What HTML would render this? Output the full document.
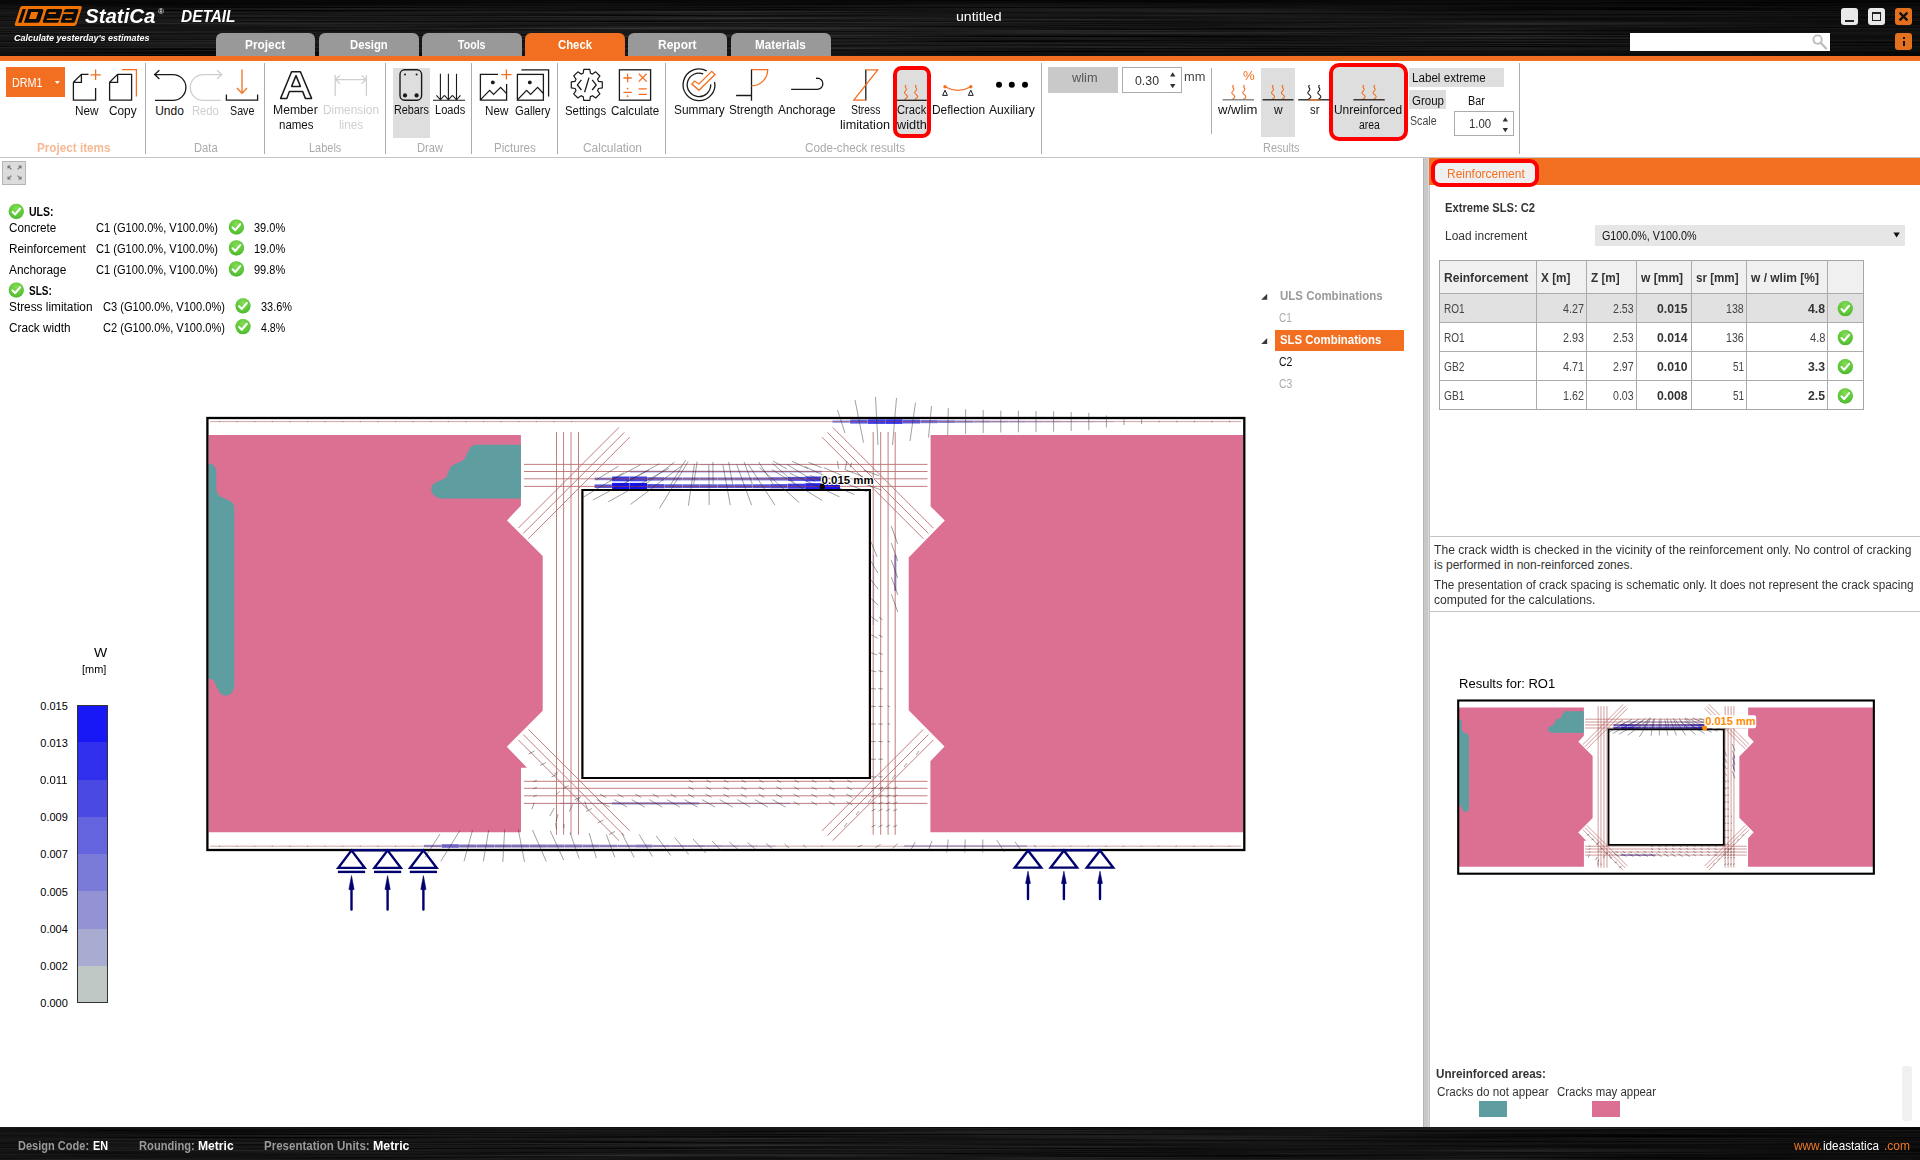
<!DOCTYPE html><html><head><meta charset="utf-8"><title>IDEA StatiCa Detail</title><style>
html,body{margin:0;padding:0;background:#fff;}
body{width:1920px;height:1160px;position:relative;overflow:hidden;font-family:"Liberation Sans",sans-serif;}
.t{position:absolute;white-space:nowrap;line-height:1;transform-origin:0 0;display:block;}
.b{position:absolute;box-sizing:border-box;}
svg{position:absolute;overflow:visible}
#dro1reb line,#dro1c{vector-effect:non-scaling-stroke}
.brush{background:
 repeating-linear-gradient(180deg, rgba(255,255,255,0.05) 0px, rgba(255,255,255,0) 1px, rgba(255,255,255,0.035) 2px, rgba(0,0,0,0) 3px, rgba(255,255,255,0.02) 5px),
 linear-gradient(180deg,#050505 0%,#1c1c1c 22%,#262626 38%,#141414 60%,#070707 100%);}
</style></head><body>
<svg style="left:0;top:0" width="1920" height="57"><defs><filter id="brush" x="0" y="0" width="100%" height="100%" color-interpolation-filters="sRGB"><feTurbulence type="fractalNoise" baseFrequency="0.0022 0.8" numOctaves="3" seed="4" result="n"/><feColorMatrix type="matrix" values="0.30 0 0 0 -0.05  0.30 0 0 0 -0.05  0.30 0 0 0 -0.05  0 0 0 0 1"/></filter><linearGradient id="hg" x1="0" y1="0" x2="0" y2="1"><stop offset="0" stop-color="#000" stop-opacity="0.75"/><stop offset="0.18" stop-color="#000" stop-opacity="0.15"/><stop offset="0.5" stop-color="#000" stop-opacity="0"/><stop offset="0.85" stop-color="#000" stop-opacity="0.1"/><stop offset="1" stop-color="#000" stop-opacity="0.45"/></linearGradient><linearGradient id="hg2" x1="0" y1="0" x2="1" y2="0"><stop offset="0" stop-color="#000" stop-opacity="0.1"/><stop offset="0.5" stop-color="#000" stop-opacity="0"/><stop offset="0.8" stop-color="#000" stop-opacity="0.2"/><stop offset="1" stop-color="#000" stop-opacity="0.45"/></linearGradient></defs><rect width="1920" height="57" fill="#1a1a1a"/><rect width="1920" height="57" filter="url(#brush)"/><rect width="1920" height="57" fill="url(#hg)"/><rect width="1920" height="57" fill="url(#hg2)"/></svg>
<div class="b" style="left:0px;top:56px;width:1920px;height:5px;background:#F26F21;"></div>
<div class="b" style="left:215.5px;top:33px;width:99.5px;height:23px;background:#999;border-radius:6px 6px 0 0;"></div>
<span class="t" style="left:244.70px;top:39px;font-size:12.5px;color:#fff;font-weight:bold;transform:scaleX(0.9486);">Project</span>
<div class="b" style="left:319.2px;top:33px;width:99.4px;height:23px;background:#999;border-radius:6px 6px 0 0;"></div>
<span class="t" style="left:350.20px;top:39px;font-size:12.5px;color:#fff;font-weight:bold;transform:scaleX(0.9070);">Design</span>
<div class="b" style="left:422.3px;top:33px;width:99.3px;height:23px;background:#999;border-radius:6px 6px 0 0;"></div>
<span class="t" style="left:458.40px;top:39px;font-size:12.5px;color:#fff;font-weight:bold;transform:scaleX(0.8486);">Tools</span>
<div class="b" style="left:525px;top:33px;width:100px;height:23px;background:#F26F21;border-radius:6px 6px 0 0;"></div>
<span class="t" style="left:558.00px;top:39px;font-size:12.5px;color:#fff;font-weight:bold;transform:scaleX(0.9063);">Check</span>
<div class="b" style="left:627.8px;top:33px;width:99.7px;height:23px;background:#999;border-radius:6px 6px 0 0;"></div>
<span class="t" style="left:658.00px;top:39px;font-size:12.5px;color:#fff;font-weight:bold;transform:scaleX(0.9584);">Report</span>
<div class="b" style="left:731.3px;top:33px;width:99.3px;height:23px;background:#999;border-radius:6px 6px 0 0;"></div>
<span class="t" style="left:755.00px;top:39px;font-size:12.5px;color:#fff;font-weight:bold;transform:scaleX(0.9374);">Materials</span>
<svg style="left:0;top:0" width="260" height="56" viewBox="0 0 260 56">
<g transform="translate(14.2,26) skewX(-17.7)">
<rect x="0" y="-20" width="61.8" height="20" rx="2" fill="#F07204"/>
<g fill="#0a0a0a">
<rect x="2.9" y="-16.9" width="3.4" height="13.7"/>
<path d="M8.7,-16.9 H22.3 Q24.3,-16.9 24.3,-14.9 V-5.2 Q24.3,-3.2 22.3,-3.2 H8.7 Z M12.5,-14 V-7 H19.6 V-14 Z" fill-rule="evenodd"/>
<rect x="27.1" y="-16.9" width="16" height="13.7" rx="1.6"/>
<rect x="45" y="-16.9" width="14.4" height="13.7" rx="1.6"/>
</g><g fill="#F07204">
<rect x="30.3" y="-13.7" width="7.4" height="1.7"/><rect x="30.5" y="-7.6" width="12.8" height="1.6"/>
<rect x="44.8" y="-13.7" width="10.4" height="1.7"/><rect x="48.8" y="-7.6" width="6.7" height="1.6"/>
</g></g></svg>
<span class="t" style="left:85.00px;top:6px;font-size:20px;color:#fff;font-weight:bold;font-style:italic;transform:scaleX(1.0231);">StatiCa</span>
<span class="t" style="left:157.50px;top:8px;font-size:7px;color:#fff;transform:scaleX(1.1633);">®</span>
<span class="t" style="left:181.30px;top:9px;font-size:15.8px;color:#fff;font-weight:bold;font-style:italic;transform:scaleX(0.9753);">DETAIL</span>
<span class="t" style="left:13.80px;top:33px;font-size:9.6px;color:#fff;font-weight:bold;font-style:italic;transform:scaleX(0.9374);">Calculate yesterday's estimates</span>
<span class="t" style="left:955.50px;top:10px;font-size:13px;color:#fff;transform:scaleX(1.0854);">untitled</span>
<div class="b" style="left:1841.2px;top:8px;width:16.8px;height:17px;background:#e9e9e9;border-radius:3px;"></div>
<div class="b" style="left:1845px;top:19.6px;width:9px;height:2px;background:#222;"></div>
<div class="b" style="left:1868px;top:8px;width:17px;height:17px;background:#e9e9e9;border-radius:3px;"></div>
<div class="b" style="left:1872px;top:12px;width:9px;height:9px;background:transparent;border:1.6px solid #222;border-top-width:2.6px;"></div>
<div class="b" style="left:1895px;top:8px;width:17px;height:17px;background:#e2701f;border-radius:3px;"></div>
<svg style="left:1895px;top:8px" width="17" height="17"><path d="M4.6,4.6 L12.4,12.4 M12.4,4.6 L4.6,12.4" stroke="#111" stroke-width="2.2"/></svg>
<div class="b" style="left:1895px;top:33px;width:17px;height:17px;background:#e2701f;border-radius:3px;"></div>
<div class="b" style="left:1902.5px;top:37px;width:2.5px;height:2.4px;background:#111;"></div>
<div class="b" style="left:1902.5px;top:41px;width:2.5px;height:5.4px;background:#111;"></div>
<div class="b" style="left:1630px;top:33.4px;width:200px;height:17.2px;background:#fff;"></div>
<svg style="left:1810px;top:33px" width="20" height="18"><circle cx="7.6" cy="6.6" r="4.2" fill="none" stroke="#bbb" stroke-width="1.8"/><path d="M10.6,9.8 L16.6,16" stroke="#bbb" stroke-width="2.2"/></svg>
<div class="b" style="left:0px;top:156.5px;width:1920px;height:1.5px;background:#c6c6c6;"></div>
<div class="b" style="left:144.9px;top:63.3px;width:1px;height:91px;background:#ababab;"></div>
<div class="b" style="left:264.1px;top:63.3px;width:1px;height:91px;background:#ababab;"></div>
<div class="b" style="left:385.1px;top:63.3px;width:1px;height:91px;background:#ababab;"></div>
<div class="b" style="left:470.8px;top:63.3px;width:1px;height:91px;background:#ababab;"></div>
<div class="b" style="left:557px;top:63.3px;width:1px;height:91px;background:#ababab;"></div>
<div class="b" style="left:665.1px;top:63.3px;width:1px;height:91px;background:#ababab;"></div>
<div class="b" style="left:1041.2px;top:63.3px;width:1px;height:91px;background:#ababab;"></div>
<div class="b" style="left:1518.5px;top:63.3px;width:1px;height:91px;background:#ababab;"></div>
<div class="b" style="left:1210.6px;top:67.7px;width:1.2px;height:66.3px;background:#ababab;"></div>
<span class="t" style="left:36.50px;top:142px;font-size:12.5px;color:#f6b995;font-weight:bold;transform:scaleX(0.9363);">Project items</span>
<span class="t" style="left:194.00px;top:142px;font-size:12px;color:#aaa;transform:scaleX(0.9350);">Data</span>
<span class="t" style="left:309.40px;top:142px;font-size:12px;color:#aaa;transform:scaleX(0.9135);">Labels</span>
<span class="t" style="left:416.50px;top:142px;font-size:12px;color:#aaa;transform:scaleX(0.9285);">Draw</span>
<span class="t" style="left:494.00px;top:142px;font-size:12px;color:#aaa;transform:scaleX(0.9643);">Pictures</span>
<span class="t" style="left:582.50px;top:142px;font-size:12px;color:#aaa;transform:scaleX(0.9939);">Calculation</span>
<span class="t" style="left:804.80px;top:142px;font-size:12px;color:#aaa;transform:scaleX(0.9736);">Code-check results</span>
<span class="t" style="left:1262.50px;top:142px;font-size:12px;color:#aaa;transform:scaleX(0.9122);">Results</span>
<div class="b" style="left:5.8px;top:67px;width:59.2px;height:29.8px;background:#F26F21;"></div>
<span class="t" style="left:12.40px;top:77px;font-size:12.5px;color:#fff;transform:scaleX(0.8612);">DRM1</span>
<svg style="left:53px;top:79px" width="10" height="8"><path d="M1.8,2 L6.8,2 L4.3,5 Z" fill="#fff"/></svg>
<div class="b" style="left:393px;top:68px;width:37px;height:69.7px;background:#dedede;"></div>
<div class="b" style="left:1261.3px;top:67.7px;width:33.5px;height:69.6px;background:#dedede;"></div>
<div class="b" style="left:893px;top:66.3px;width:37.8px;height:71.6px;background:#dedede;border:4px solid #fe0000;border-radius:8.5px;"></div>
<div class="b" style="left:1329.2px;top:63.3px;width:78.6px;height:77.5px;background:#dedede;border:4.4px solid #fe0000;border-radius:10px;"></div>
<span class="t" style="left:75.40px;top:105px;font-size:12px;color:#111;transform:scaleX(0.9831);">New</span>
<span class="t" style="left:109.40px;top:105px;font-size:12px;color:#111;transform:scaleX(0.9853);">Copy</span>
<span class="t" style="left:155.20px;top:105px;font-size:12px;color:#111;">Undo</span>
<span class="t" style="left:229.80px;top:105px;font-size:12px;color:#111;transform:scaleX(0.8921);">Save</span>
<span class="t" style="left:273.30px;top:104px;font-size:12px;color:#111;transform:scaleX(1.0157);">Member</span>
<span class="t" style="left:278.50px;top:119px;font-size:12px;color:#111;transform:scaleX(0.9579);">names</span>
<span class="t" style="left:394.20px;top:104px;font-size:12px;color:#111;transform:scaleX(0.8996);">Rebars</span>
<span class="t" style="left:434.60px;top:104px;font-size:12px;color:#111;transform:scaleX(0.9237);">Loads</span>
<span class="t" style="left:484.60px;top:105px;font-size:12px;color:#111;transform:scaleX(0.9748);">New</span>
<span class="t" style="left:515.40px;top:105px;font-size:12px;color:#111;transform:scaleX(0.9313);">Gallery</span>
<span class="t" style="left:565.40px;top:105px;font-size:12px;color:#111;transform:scaleX(0.9479);">Settings</span>
<span class="t" style="left:610.60px;top:105px;font-size:12px;color:#111;transform:scaleX(0.9635);">Calculate</span>
<span class="t" style="left:674.20px;top:104px;font-size:12px;color:#111;transform:scaleX(0.9894);">Summary</span>
<span class="t" style="left:729.20px;top:104px;font-size:12px;color:#111;transform:scaleX(0.9765);">Strength</span>
<span class="t" style="left:778.30px;top:104px;font-size:12px;color:#111;transform:scaleX(0.9941);">Anchorage</span>
<span class="t" style="left:851.30px;top:104px;font-size:12px;color:#111;transform:scaleX(0.8674);">Stress</span>
<span class="t" style="left:840.20px;top:119px;font-size:12px;color:#111;transform:scaleX(1.0560);">limitation</span>
<span class="t" style="left:897.00px;top:104px;font-size:12px;color:#111;transform:scaleX(0.9350);">Crack</span>
<span class="t" style="left:896.50px;top:119px;font-size:12px;color:#111;transform:scaleX(1.0638);">width</span>
<span class="t" style="left:931.50px;top:104px;font-size:12px;color:#111;transform:scaleX(0.9951);">Deflection</span>
<span class="t" style="left:989.20px;top:104px;font-size:12px;color:#111;transform:scaleX(1.0100);">Auxiliary</span>
<span class="t" style="left:1218.00px;top:104px;font-size:12px;color:#111;transform:scaleX(1.0919);">w/wlim</span>
<span class="t" style="left:1274.00px;top:104px;font-size:12px;color:#111;transform:scaleX(0.9924);">w</span>
<span class="t" style="left:1309.80px;top:104px;font-size:12px;color:#111;transform:scaleX(0.9403);">sr</span>
<span class="t" style="left:1334.20px;top:104px;font-size:12px;color:#111;transform:scaleX(0.9927);">Unreinforced</span>
<span class="t" style="left:1358.60px;top:119px;font-size:12px;color:#111;transform:scaleX(0.8702);">area</span>
<span class="t" style="left:192.00px;top:105px;font-size:12px;color:#cfcfcf;transform:scaleX(0.9343);">Redo</span>
<span class="t" style="left:322.50px;top:104px;font-size:12px;color:#cfcfcf;transform:scaleX(0.9879);">Dimension</span>
<span class="t" style="left:339.00px;top:119px;font-size:12px;color:#cfcfcf;transform:scaleX(0.9725);">lines</span>
<div class="b" style="left:1047.7px;top:67px;width:70.3px;height:25.5px;background:#c9c9c9;"></div>
<span class="t" style="left:1072.20px;top:72px;font-size:12px;color:#555;transform:scaleX(1.0628);">wlim</span>
<div class="b" style="left:1122px;top:67px;width:59.8px;height:25.5px;background:#fff;border:1px solid #ababab;"></div>
<span class="t" style="left:1135.00px;top:75px;font-size:12.5px;color:#333;transform:scaleX(0.9865);">0.30</span>
<svg style="left:1168px;top:70px" width="10" height="22"><path d="M2,6.4 L7.4,6.4 L4.7,2.2 Z M2,14 L7.4,14 L4.7,18.2 Z" fill="#333"/></svg>
<span class="t" style="left:1184.40px;top:71px;font-size:12px;color:#444;transform:scaleX(1.0703);">mm</span>
<div class="b" style="left:1409px;top:68.2px;width:95px;height:19.1px;background:#dedede;"></div>
<span class="t" style="left:1411.50px;top:72px;font-size:12px;color:#111;transform:scaleX(0.9692);">Label extreme</span>
<div class="b" style="left:1409px;top:90.4px;width:37px;height:19px;background:#dedede;"></div>
<span class="t" style="left:1411.50px;top:95px;font-size:12px;color:#111;transform:scaleX(0.9595);">Group</span>
<span class="t" style="left:1467.50px;top:95px;font-size:12px;color:#111;transform:scaleX(0.9050);">Bar</span>
<span class="t" style="left:1410.20px;top:115px;font-size:12px;color:#444;transform:scaleX(0.8862);">Scale</span>
<div class="b" style="left:1454px;top:111.2px;width:59.8px;height:25px;background:#fff;border:1px solid #ababab;"></div>
<span class="t" style="left:1468.80px;top:118px;font-size:12.5px;color:#333;transform:scaleX(0.9125);">1.00</span>
<svg style="left:1500px;top:113px" width="10" height="22"><path d="M2.6,8.4 L8,8.4 L5.3,4.2 Z M2.6,15 L8,15 L5.3,19.2 Z" fill="#333"/></svg>
<span class="t" style="left:1242.50px;top:69px;font-size:13.5px;color:#F26F21;transform:scaleX(0.9747);">%</span>
<svg style="left:0;top:0" width="1920" height="160" viewBox="0 0 1920 160" fill="none" stroke-width="1.3"><path d="M73.4,82.3 L73.4,100.2 L95.6,100.2 L95.6,88 M73.4,82.3 L81.4,74.3 L88.5,74.3 M73.4,82.3 L81.4,82.3 L81.4,74.3" stroke="#1a1a1a"/><path d="M95.6,69.6 L95.6,80 M90.4,74.8 L100.8,74.8" stroke="#F26F21"/><path d="M109.6,82.3 L109.6,100.2 L131.6,100.2 L131.6,74.3 L117.6,74.3 Z M109.6,82.3 L117.6,82.3 L117.6,74.3" stroke="#1a1a1a"/><path d="M122,69.6 L136.4,69.6 L136.4,96.6" stroke="#F26F21"/><path d="M155,100.4 L173,100.4 A12.9,12.9 0 0 0 173,74.6 L154.6,74.6 M159.4,70.2 L154.6,74.6 L159.4,79" stroke="#1a1a1a"/><path d="M220.8,100.4 L203.2,100.4 A12.9,12.9 0 0 1 203.2,74.6 L221.8,74.6 M217,70.2 L221.8,74.6 L217,79" stroke="#cfcfcf"/><path d="M226.4,94.6 L226.4,100.2 L257.6,100.2 L257.6,94.6" stroke="#1a1a1a"/><path d="M242,69.6 L242,93 M237,88 L242,93.4 L247,88" stroke="#F26F21"/><path d="M280.6,98.4 L291.6,71.8 L300.4,71.8 L311.6,98.4 L305.4,98.4 L302.6,91.4 L289.4,91.4 L286.8,98.4 Z M291.6,86.4 L300.4,86.4 L296,75.6 Z" stroke="#1a1a1a" stroke-width="1.5" stroke-linejoin="round"/><path d="M335.2,75 L335.2,96 M366.4,75 L366.4,96 M335.2,79.6 L366.4,79.6 M340,75.4 L335.6,79.6 L340,83.8 M361.6,75.4 L366,79.6 L361.6,83.8" stroke="#cfcfcf"/><rect x="400" y="69.8" width="21.6" height="30.4" rx="4.6" stroke="#1a1a1a" stroke-width="1.4"/><circle cx="405" cy="95.4" r="2.1" fill="#1a1a1a"/><circle cx="416.6" cy="95.4" r="2.1" fill="#1a1a1a"/><circle cx="405" cy="74.4" r="1" fill="#1a1a1a"/><circle cx="416.6" cy="74.4" r="1" fill="#1a1a1a"/><path d="M440.4,73.8 L440.4,99.4 M436.4,95.4 L440.4,99.8 L444.4,95.4 M448.4,73.8 L448.4,99.4 M444.4,95.4 L448.4,99.8 L452.4,95.4 M456.5,73.8 L456.5,99.4 M452.5,95.4 L456.5,99.8 L460.5,95.4  M433,100.3 L465,100.3" stroke="#1a1a1a" stroke-width="1.1"/><path d="M498,74.4 L480.4,74.4 L480.4,100.2 L506.6,100.2 L506.6,84 M480.6,99.6 L489.6,90.4 L493.6,94.4 L500.6,87.4 L506.4,93.4" stroke="#1a1a1a"/><circle cx="492.8" cy="82.4" r="1.9" fill="#1a1a1a"/><path d="M506.4,69.6 L506.4,79.6 M501.2,74.6 L511.6,74.6" stroke="#F26F21"/><rect x="517.4" y="74.4" width="26" height="25.8" stroke="#1a1a1a"/><path d="M517.6,99.6 L526.6,90.4 L530.6,94.4 L537.6,87.4 L543.2,93.2 M521.4,69.8 L548.6,69.8 L548.6,96.6" stroke="#1a1a1a"/><circle cx="529.8" cy="82.4" r="1.9" fill="#1a1a1a"/><path d="M583.8,69.4 L589.8,69.4 L590.4,73.2 L592.5,74.1 L595.7,71.8 L599.9,76.0 L597.6,79.2 L598.5,81.3 L602.3,81.9 L602.3,87.9 L598.5,88.5 L597.6,90.6 L599.9,93.8 L595.7,98.0 L592.5,95.7 L590.4,96.6 L589.8,100.4 L583.8,100.4 L583.2,96.6 L581.1,95.7 L577.9,98.0 L573.7,93.8 L576.0,90.6 L575.1,88.5 L571.3,87.9 L571.3,81.9 L575.1,81.3 L576.0,79.2 L573.7,76.0 L577.9,71.8 L581.1,74.1 L583.2,73.2 Z" stroke="#1a1a1a" stroke-width="1.2" fill="none" stroke-linejoin="round"/><path d="M581.4,79.8 L577.4,84.9 L581.4,90 M592.2,79.8 L596.2,84.9 L592.2,90 M589,77.6 L584.6,92.2" stroke="#1a1a1a"/><rect x="619.4" y="69.8" width="31.2" height="30.4" stroke="#1a1a1a" stroke-width="1.3"/><path d="M623.4,78 L631.8,78 M627.6,73.8 L627.6,82.2 M638.8,73.8 L646.6,81.6 M646.6,73.8 L638.8,81.6 M623.4,92.4 L631.8,92.4 M638.6,88.8 L646.8,88.8 M638.6,94.4 L646.8,94.4" stroke="#F26F21"/><circle cx="627.6" cy="88.6" r="0.9" fill="#F26F21"/><circle cx="627.6" cy="96.2" r="0.9" fill="#F26F21"/><path d="M706.7,70.9 A15.9,15.9 0 1 0 714.6,81.8" stroke="#1a1a1a"/><path d="M703.2,73.9 A11.75,11.75 0 1 0 710.7,84.4" stroke="#1a1a1a"/><path d="M691.8,84.1 L694.6,81 L699,84 L711.7,71.3 L715,74.5 L699,90.3 Z" stroke="#F26F21" stroke-linejoin="miter"/><path d="M736.1,95.5 L751.5,95.5 M751.5,69.3 L751.5,100.8" stroke="#1a1a1a"/><path d="M751.5,69.7 L767.7,69.7 A16.2,16.2 0 0 1 751.5,85.8" stroke="#F26F21"/><path d="M791.1,89.3 L817.3,89.3 A5.55,5.55 0 0 0 817.3,78.2 L816,78.3" stroke="#1a1a1a"/><path d="M865.8,69.6 L865.8,100.4" stroke="#1a1a1a"/><path d="M865.8,69.8 L877.7,69.8 L853.8,100.2 L865.8,100.2" stroke="#F26F21"/><path d="M906.2,85.2 C903.4,86.928 908,88.368 906,90.384 S903.6,92.688 906.2,94.704 S907.2,97.584 904.4,99.6" stroke="#F26F21" stroke-width="1.1" fill="none"/><path d="M916.4,85.2 C913.6,86.928 918.2,88.368 916.2,90.384 S913.8,92.688 916.4,94.704 S917.4,97.584 914.6,99.6" stroke="#F26F21" stroke-width="1.1" fill="none"/><path d="M897,100.3 L926.8,100.3" stroke="#1a1a1a"/><path d="M945,86.8 Q958,94 970.8,86.8" stroke="#F26F21"/><circle cx="945" cy="86.8" r="1.7" fill="#F26F21"/><circle cx="970.8" cy="86.8" r="1.7" fill="#F26F21"/><path d="M945,90.2 L942.6,95.4 L947.4,95.4 Z M970.8,90.2 L968.4,95.4 L973.2,95.4 Z" stroke="#1a1a1a" stroke-width="1"/><circle cx="999" cy="84.8" r="3" fill="#000"/><circle cx="1011.8" cy="84.8" r="3" fill="#000"/><circle cx="1025" cy="84.8" r="3" fill="#000"/><path d="M1233.6,85.2 C1230.8,86.952 1235.4,88.412 1233.4,90.456 S1231,92.792 1233.6,94.836 S1234.6,97.756 1231.8,99.8" stroke="#F26F21" stroke-width="1.1" fill="none"/><path d="M1244.6,85.2 C1241.8,86.952 1246.4,88.412 1244.4,90.456 S1242,92.792 1244.6,94.836 S1245.6,97.756 1242.8,99.8" stroke="#F26F21" stroke-width="1.1" fill="none"/><path d="M1222.6,99.8 L1254,99.8" stroke="#777"/><path d="M1273.3,85.2 C1270.5,86.952 1275.1,88.412 1273.1,90.456 S1270.7,92.792 1273.3,94.836 S1274.3,97.756 1271.5,99.8" stroke="#F26F21" stroke-width="1.1" fill="none"/><path d="M1283.2,85.2 C1280.4,86.952 1285,88.412 1283,90.456 S1280.6,92.792 1283.2,94.836 S1284.2,97.756 1281.4,99.8" stroke="#F26F21" stroke-width="1.1" fill="none"/><path d="M1262.5,99.8 L1293.5,99.8" stroke="#1a1a1a"/><path d="M1309.6,85.2 C1306.8,86.952 1311.4,88.412 1309.4,90.456 S1307,92.792 1309.6,94.836 S1310.6,97.756 1307.8,99.8" stroke="#1a1a1a" stroke-width="1.1" fill="none"/><path d="M1319.6,85.2 C1316.8,86.952 1321.4,88.412 1319.4,90.456 S1317,92.792 1319.6,94.836 S1320.6,97.756 1317.8,99.8" stroke="#1a1a1a" stroke-width="1.1" fill="none"/><path d="M1298.2,99.8 L1329.5,99.8" stroke="#1a1a1a"/><path d="M1308.6,99.8 L1319.4,99.8" stroke="#F26F21"/><path d="M1363.9,85.2 C1361.1,86.952 1365.7,88.412 1363.7,90.456 S1361.3,92.792 1363.9,94.836 S1364.9,97.756 1362.1,99.8" stroke="#F26F21" stroke-width="1.1" fill="none"/><path d="M1374.9,85.2 C1372.1,86.952 1376.7,88.412 1374.7,90.456 S1372.3,92.792 1374.9,94.836 S1375.9,97.756 1373.1,99.8" stroke="#F26F21" stroke-width="1.1" fill="none"/><path d="M1353.4,99.8 L1384.7,99.8" stroke="#1a1a1a"/></svg>
<div class="b" style="left:2px;top:161.3px;width:23.8px;height:23.7px;background:#dcdcdc;border:1px solid #b4b4b4;"></div>
<svg style="left:2.5px;top:161.3px" width="23" height="23" viewBox="0 0 23 23"><g stroke="#777" stroke-width="1.1" fill="none"><path d="M5,7.6 L5,5 L7.6,5 M5,5 L8.4,8.4"/><path d="M18,7.6 L18,5 L15.4,5 M18,5 L14.6,8.4"/><path d="M5,15.4 L5,18 L7.6,18 M5,18 L8.4,14.6"/><path d="M18,15.4 L18,18 L15.4,18 M18,18 L14.6,14.6"/></g></svg>
<svg width="0" height="0" style="left:0;top:0"><defs><radialGradient id="gchk" cx="0.5" cy="0.3" r="0.8"><stop offset="0" stop-color="#8ee05a" stop-opacity="0.9"/><stop offset="0.6" stop-color="#5cc437" stop-opacity="0.6"/><stop offset="1" stop-color="#3fa82a" stop-opacity="0.9"/></radialGradient></defs></svg>
<span class="t" style="left:29.30px;top:206px;font-size:12.5px;color:#000;font-weight:bold;transform:scaleX(0.8401);">ULS:</span>
<span class="t" style="left:29.30px;top:285px;font-size:12.5px;color:#000;font-weight:bold;transform:scaleX(0.7972);">SLS:</span>
<span class="t" style="left:9.00px;top:222px;font-size:12px;color:#000;transform:scaleX(0.9714);">Concrete</span>
<span class="t" style="left:96.30px;top:222px;font-size:12px;color:#000;transform:scaleX(0.9237);">C1 (G100.0%, V100.0%)</span>
<span class="t" style="left:253.80px;top:222px;font-size:12px;color:#000;transform:scaleX(0.9170);">39.0%</span>
<span class="t" style="left:9.00px;top:243px;font-size:12px;color:#000;transform:scaleX(0.9842);">Reinforcement</span>
<span class="t" style="left:96.30px;top:243px;font-size:12px;color:#000;transform:scaleX(0.9237);">C1 (G100.0%, V100.0%)</span>
<span class="t" style="left:253.80px;top:243px;font-size:12px;color:#000;transform:scaleX(0.9170);">19.0%</span>
<span class="t" style="left:9.00px;top:264px;font-size:12px;color:#000;transform:scaleX(0.9872);">Anchorage</span>
<span class="t" style="left:96.30px;top:264px;font-size:12px;color:#000;transform:scaleX(0.9237);">C1 (G100.0%, V100.0%)</span>
<span class="t" style="left:253.80px;top:264px;font-size:12px;color:#000;transform:scaleX(0.9170);">99.8%</span>
<span class="t" style="left:9.00px;top:301px;font-size:12px;color:#000;transform:scaleX(0.9859);">Stress limitation</span>
<span class="t" style="left:103.00px;top:301px;font-size:12px;color:#000;transform:scaleX(0.9237);">C3 (G100.0%, V100.0%)</span>
<span class="t" style="left:260.80px;top:301px;font-size:12px;color:#000;transform:scaleX(0.9111);">33.6%</span>
<span class="t" style="left:9.00px;top:322px;font-size:12px;color:#000;transform:scaleX(0.9811);">Crack width</span>
<span class="t" style="left:103.00px;top:322px;font-size:12px;color:#000;transform:scaleX(0.9237);">C2 (G100.0%, V100.0%)</span>
<span class="t" style="left:260.80px;top:322px;font-size:12px;color:#000;transform:scaleX(0.8848);">4.8%</span>
<span class="t" style="left:93.80px;top:646px;font-size:13.4px;color:#000;transform:scaleX(1.0437);">W</span>
<span class="t" style="left:82.10px;top:664px;font-size:11px;color:#000;transform:scaleX(0.9944);">[mm]</span>
<div class="b" style="left:77.1px;top:705.2px;width:30px;height:37.525px;background:#1818f6;"></div>
<div class="b" style="left:77.1px;top:742.425px;width:30px;height:37.525px;background:#3030ec;"></div>
<div class="b" style="left:77.1px;top:779.65px;width:30px;height:37.525px;background:#4a4ae2;"></div>
<div class="b" style="left:77.1px;top:816.875px;width:30px;height:37.525px;background:#6464de;"></div>
<div class="b" style="left:77.1px;top:854.1px;width:30px;height:37.525px;background:#7a7ad8;"></div>
<div class="b" style="left:77.1px;top:891.325px;width:30px;height:37.525px;background:#9292d4;"></div>
<div class="b" style="left:77.1px;top:928.55px;width:30px;height:37.525px;background:#a8acd0;"></div>
<div class="b" style="left:77.1px;top:965.775px;width:30px;height:37.525px;background:#c0c8c6;"></div>
<div class="b" style="left:76.6px;top:704.7px;width:31px;height:298.8px;background:transparent;border:1px solid #333;"></div>
<span class="t" style="left:40.30px;top:701px;font-size:11px;color:#000;">0.015</span>
<span class="t" style="left:40.30px;top:738px;font-size:11px;color:#000;">0.013</span>
<span class="t" style="left:40.30px;top:775px;font-size:11px;color:#000;transform:scaleX(1.0333);">0.011</span>
<span class="t" style="left:40.30px;top:812px;font-size:11px;color:#000;">0.009</span>
<span class="t" style="left:40.30px;top:849px;font-size:11px;color:#000;">0.007</span>
<span class="t" style="left:40.30px;top:887px;font-size:11px;color:#000;">0.005</span>
<span class="t" style="left:40.30px;top:924px;font-size:11px;color:#000;">0.004</span>
<span class="t" style="left:40.30px;top:961px;font-size:11px;color:#000;">0.002</span>
<span class="t" style="left:40.30px;top:998px;font-size:11px;color:#000;">0.000</span>
<span class="t" style="left:1280.40px;top:290px;font-size:12.5px;color:#999;font-weight:bold;transform:scaleX(0.9177);">ULS Combinations</span>
<span class="t" style="left:1279.20px;top:312px;font-size:12px;color:#aaa;transform:scaleX(0.8345);">C1</span>
<div class="b" style="left:1275px;top:330px;width:129px;height:20.6px;background:#F26F21;"></div>
<span class="t" style="left:1279.80px;top:334px;font-size:12.5px;color:#fff;font-weight:bold;transform:scaleX(0.9126);">SLS Combinations</span>
<span class="t" style="left:1279.20px;top:356px;font-size:12px;color:#111;transform:scaleX(0.8671);">C2</span>
<span class="t" style="left:1279.20px;top:378px;font-size:12px;color:#aaa;transform:scaleX(0.8671);">C3</span>
<svg style="left:1260px;top:292px" width="10" height="56"><path d="M1.2,7.8 L7.2,7.8 L7.2,1.8 Z M1.2,51.9 L7.2,51.9 L7.2,45.9 Z" fill="#3a3a3a"/></svg>
<div class="b" style="left:1422.6px;top:157.5px;width:6.8px;height:970.5px;background:#c8c8c8;border-left:1px solid #b4b4b4;border-right:1px solid #d8d8d8;"></div>
<div class="b" style="left:1429.4px;top:157.9px;width:490.6px;height:27px;background:#F26F21;"></div>
<div class="b" style="left:1431.4px;top:159px;width:107.5px;height:27.9px;background:#f0f0f0;border:4px solid #fe0000;border-radius:9px;"></div>
<span class="t" style="left:1447.30px;top:168px;font-size:12px;color:#F26F21;transform:scaleX(0.9957);">Reinforcement</span>
<span class="t" style="left:1445.30px;top:202px;font-size:12.3px;color:#333;font-weight:bold;transform:scaleX(0.9090);">Extreme SLS: C2</span>
<span class="t" style="left:1445.30px;top:230px;font-size:12px;color:#333;transform:scaleX(0.9938);">Load increment</span>
<div class="b" style="left:1595px;top:225.3px;width:310px;height:20.3px;background:#e6e6e6;"></div>
<span class="t" style="left:1601.50px;top:230px;font-size:12px;color:#111;transform:scaleX(0.8965);">G100.0%, V100.0%</span>
<svg style="left:1892px;top:231px" width="10" height="8"><path d="M1.4,1.6 L7.8,1.6 L4.6,6.6 Z" fill="#111"/></svg>
<div class="b" style="left:1439.5px;top:260.5px;width:423.8px;height:149.3px;background:#fff;"></div>
<div class="b" style="left:1439.5px;top:260.5px;width:423.8px;height:32.5px;background:#f0f0f0;"></div>
<div class="b" style="left:1439.5px;top:293px;width:423.8px;height:29.4px;background:#e1e1e1;"></div>
<div class="b" style="left:1439.5px;top:292.5px;width:423.8px;height:1px;background:#ababab;"></div>
<div class="b" style="left:1439.5px;top:321.9px;width:423.8px;height:1px;background:#ababab;"></div>
<div class="b" style="left:1439.5px;top:351.1px;width:423.8px;height:1px;background:#ababab;"></div>
<div class="b" style="left:1439.5px;top:380px;width:423.8px;height:1px;background:#ababab;"></div>
<div class="b" style="left:1535.9px;top:260.5px;width:1px;height:149.3px;background:#ababab;"></div>
<div class="b" style="left:1585.9px;top:260.5px;width:1px;height:149.3px;background:#ababab;"></div>
<div class="b" style="left:1635.9px;top:260.5px;width:1px;height:149.3px;background:#ababab;"></div>
<div class="b" style="left:1690.9px;top:260.5px;width:1px;height:149.3px;background:#ababab;"></div>
<div class="b" style="left:1746.1px;top:260.5px;width:1px;height:149.3px;background:#ababab;"></div>
<div class="b" style="left:1827px;top:260.5px;width:1px;height:149.3px;background:#ababab;"></div>
<div class="b" style="left:1438.8px;top:259.8px;width:425.2px;height:150.6px;background:transparent;border:1.6px solid #a6a6a6;"></div>
<span class="t" style="left:1444.20px;top:272px;font-size:12.3px;color:#333;font-weight:bold;transform:scaleX(0.9801);">Reinforcement</span>
<span class="t" style="left:1541.00px;top:272px;font-size:12.3px;color:#333;font-weight:bold;transform:scaleX(0.9594);">X [m]</span>
<span class="t" style="left:1591.00px;top:272px;font-size:12.3px;color:#333;font-weight:bold;transform:scaleX(0.9548);">Z [m]</span>
<span class="t" style="left:1641.40px;top:272px;font-size:12.3px;color:#333;font-weight:bold;transform:scaleX(0.9780);">w [mm]</span>
<span class="t" style="left:1696.00px;top:272px;font-size:12.3px;color:#333;font-weight:bold;transform:scaleX(0.9422);">sr [mm]</span>
<span class="t" style="left:1751.30px;top:272px;font-size:12.3px;color:#333;font-weight:bold;transform:scaleX(0.9742);">w / wlim [%]</span>
<span class="t" style="left:1444.20px;top:303px;font-size:12px;color:#444;transform:scaleX(0.8349);">RO1</span>
<span class="t" style="left:1562.60px;top:303px;font-size:12px;color:#444;transform:scaleX(0.8992);">4.27</span>
<span class="t" style="left:1613.00px;top:303px;font-size:12px;color:#444;transform:scaleX(0.8820);">2.53</span>
<span class="t" style="left:1657.00px;top:303px;font-size:12.3px;color:#333;font-weight:bold;transform:scaleX(0.9942);">0.015</span>
<span class="t" style="left:1726.00px;top:303px;font-size:12px;color:#444;transform:scaleX(0.8891);">138</span>
<span class="t" style="left:1808.00px;top:303px;font-size:12.3px;color:#333;font-weight:bold;transform:scaleX(0.9942);">4.8</span>
<span class="t" style="left:1444.20px;top:332px;font-size:12px;color:#444;transform:scaleX(0.8349);">RO1</span>
<span class="t" style="left:1562.60px;top:332px;font-size:12px;color:#444;transform:scaleX(0.8992);">2.93</span>
<span class="t" style="left:1613.00px;top:332px;font-size:12px;color:#444;transform:scaleX(0.8820);">2.53</span>
<span class="t" style="left:1657.00px;top:332px;font-size:12.3px;color:#333;font-weight:bold;transform:scaleX(0.9942);">0.014</span>
<span class="t" style="left:1726.00px;top:332px;font-size:12px;color:#444;transform:scaleX(0.8891);">136</span>
<span class="t" style="left:1809.60px;top:332px;font-size:12px;color:#444;transform:scaleX(0.9232);">4.8</span>
<span class="t" style="left:1444.20px;top:361px;font-size:12px;color:#444;transform:scaleX(0.8496);">GB2</span>
<span class="t" style="left:1562.60px;top:361px;font-size:12px;color:#444;transform:scaleX(0.8992);">4.71</span>
<span class="t" style="left:1613.00px;top:361px;font-size:12px;color:#444;transform:scaleX(0.8820);">2.97</span>
<span class="t" style="left:1657.00px;top:361px;font-size:12.3px;color:#333;font-weight:bold;transform:scaleX(0.9942);">0.010</span>
<span class="t" style="left:1732.80px;top:361px;font-size:12px;color:#444;transform:scaleX(0.8242);">51</span>
<span class="t" style="left:1808.00px;top:361px;font-size:12.3px;color:#333;font-weight:bold;transform:scaleX(0.9942);">3.3</span>
<span class="t" style="left:1444.20px;top:390px;font-size:12px;color:#444;transform:scaleX(0.8496);">GB1</span>
<span class="t" style="left:1562.60px;top:390px;font-size:12px;color:#444;transform:scaleX(0.8992);">1.62</span>
<span class="t" style="left:1613.00px;top:390px;font-size:12px;color:#444;transform:scaleX(0.8820);">0.03</span>
<span class="t" style="left:1657.00px;top:390px;font-size:12.3px;color:#333;font-weight:bold;transform:scaleX(0.9942);">0.008</span>
<span class="t" style="left:1732.80px;top:390px;font-size:12px;color:#444;transform:scaleX(0.8242);">51</span>
<span class="t" style="left:1808.00px;top:390px;font-size:12.3px;color:#333;font-weight:bold;transform:scaleX(0.9942);">2.5</span>
<div class="b" style="left:1429.4px;top:536px;width:490.6px;height:1px;background:#c4c4c4;"></div>
<div class="b" style="left:1429.4px;top:610.6px;width:490.6px;height:1px;background:#c4c4c4;"></div>
<div class="b" style="left:1429.4px;top:185px;width:1px;height:943px;background:#c4c4c4;"></div>
<span class="t" style="left:1434.00px;top:544px;font-size:12px;color:#333;transform:scaleX(1.0088);">The crack width is checked in the vicinity of the reinforcement only. No control of cracking</span>
<span class="t" style="left:1434.00px;top:559px;font-size:12px;color:#333;">is performed in non-reinforced zones.</span>
<span class="t" style="left:1434.00px;top:579px;font-size:12px;color:#333;transform:scaleX(0.9839);">The presentation of crack spacing is schematic only. It does not represent the crack spacing</span>
<span class="t" style="left:1434.00px;top:594px;font-size:12px;color:#333;transform:scaleX(1.0130);">computed for the calculations.</span>
<span class="t" style="left:1458.70px;top:677px;font-size:13.2px;color:#000;transform:scaleX(0.9871);">Results for: RO1</span>
<span class="t" style="left:1436.40px;top:1068px;font-size:12.3px;color:#333;font-weight:bold;transform:scaleX(0.9466);">Unreinforced areas:</span>
<span class="t" style="left:1437.40px;top:1086px;font-size:12px;color:#333;transform:scaleX(0.9727);">Cracks do not appear</span>
<span class="t" style="left:1556.70px;top:1086px;font-size:12px;color:#333;transform:scaleX(0.9516);">Cracks may appear</span>
<div class="b" style="left:1478.6px;top:1100.6px;width:28.6px;height:16.9px;background:#5F9EA0;"></div>
<div class="b" style="left:1591.9px;top:1100.6px;width:28.1px;height:16.9px;background:#DB7093;"></div>
<div class="b" style="left:1902.3px;top:1066px;width:9.4px;height:55.3px;background:#f0f0f0;border-radius:3px;"></div>
<svg style="left:0;top:1127px" width="1920" height="33"><rect width="1920" height="33" fill="#141414"/><rect width="1920" height="33" filter="url(#brush)"/><rect width="1920" height="33" fill="#000" opacity="0.15"/><rect width="1920" height="33" fill="url(#hg2)"/></svg>
<span class="t" style="left:18.20px;top:1140px;font-size:12.3px;color:#9a9a9a;font-weight:bold;transform:scaleX(0.8969);">Design Code:</span>
<span class="t" style="left:93.00px;top:1140px;font-size:12.3px;color:#fff;font-weight:bold;transform:scaleX(0.8778);">EN</span>
<span class="t" style="left:138.50px;top:1140px;font-size:12.3px;color:#9a9a9a;font-weight:bold;transform:scaleX(0.9076);">Rounding:</span>
<span class="t" style="left:197.60px;top:1140px;font-size:12.3px;color:#fff;font-weight:bold;transform:scaleX(0.9855);">Metric</span>
<span class="t" style="left:264.30px;top:1140px;font-size:12.3px;color:#9a9a9a;font-weight:bold;transform:scaleX(0.9373);">Presentation Units:</span>
<span class="t" style="left:373.30px;top:1140px;font-size:12.3px;color:#fff;font-weight:bold;transform:scaleX(1.0076);">Metric</span>
<span class="t" style="left:1794.20px;top:1140px;font-size:12.5px;color:#f07a28;transform:scaleX(0.9476);">www.</span>
<span class="t" style="left:1823.20px;top:1140px;font-size:12.5px;color:#fff;transform:scaleX(0.9371);">ideastatica</span>
<span class="t" style="left:1883.50px;top:1140px;font-size:12.5px;color:#f07a28;transform:scaleX(0.9599);">.com</span>
<svg style="left:0;top:0" width="1920" height="1160" viewBox="0 0 1920 1160"><g transform="translate(16.3,211.3)"><circle r="7.6" fill="#62cc3e"/><circle r="7.5" fill="url(#gchk)"/><path d="M-3.8,0.4 L-1.2,3.1 L3.8,-2.8" stroke="#fff" stroke-width="2.1" fill="none" stroke-linecap="round" stroke-linejoin="round"/></g><g transform="translate(16.3,290)"><circle r="7.6" fill="#62cc3e"/><circle r="7.5" fill="url(#gchk)"/><path d="M-3.8,0.4 L-1.2,3.1 L3.8,-2.8" stroke="#fff" stroke-width="2.1" fill="none" stroke-linecap="round" stroke-linejoin="round"/></g><g transform="translate(236.4,227)"><circle r="7.6" fill="#62cc3e"/><circle r="7.5" fill="url(#gchk)"/><path d="M-3.8,0.4 L-1.2,3.1 L3.8,-2.8" stroke="#fff" stroke-width="2.1" fill="none" stroke-linecap="round" stroke-linejoin="round"/></g><g transform="translate(236.4,247.9)"><circle r="7.6" fill="#62cc3e"/><circle r="7.5" fill="url(#gchk)"/><path d="M-3.8,0.4 L-1.2,3.1 L3.8,-2.8" stroke="#fff" stroke-width="2.1" fill="none" stroke-linecap="round" stroke-linejoin="round"/></g><g transform="translate(236.4,268.9)"><circle r="7.6" fill="#62cc3e"/><circle r="7.5" fill="url(#gchk)"/><path d="M-3.8,0.4 L-1.2,3.1 L3.8,-2.8" stroke="#fff" stroke-width="2.1" fill="none" stroke-linecap="round" stroke-linejoin="round"/></g><g transform="translate(243,305.8)"><circle r="7.6" fill="#62cc3e"/><circle r="7.5" fill="url(#gchk)"/><path d="M-3.8,0.4 L-1.2,3.1 L3.8,-2.8" stroke="#fff" stroke-width="2.1" fill="none" stroke-linecap="round" stroke-linejoin="round"/></g><g transform="translate(243,326.6)"><circle r="7.6" fill="#62cc3e"/><circle r="7.5" fill="url(#gchk)"/><path d="M-3.8,0.4 L-1.2,3.1 L3.8,-2.8" stroke="#fff" stroke-width="2.1" fill="none" stroke-linecap="round" stroke-linejoin="round"/></g><g transform="translate(1845.3,308.6)"><circle r="7.6" fill="#62cc3e"/><circle r="7.5" fill="url(#gchk)"/><path d="M-3.8,0.4 L-1.2,3.1 L3.8,-2.8" stroke="#fff" stroke-width="2.1" fill="none" stroke-linecap="round" stroke-linejoin="round"/></g><g transform="translate(1845.3,337.6)"><circle r="7.6" fill="#62cc3e"/><circle r="7.5" fill="url(#gchk)"/><path d="M-3.8,0.4 L-1.2,3.1 L3.8,-2.8" stroke="#fff" stroke-width="2.1" fill="none" stroke-linecap="round" stroke-linejoin="round"/></g><g transform="translate(1845.3,366.7)"><circle r="7.6" fill="#62cc3e"/><circle r="7.5" fill="url(#gchk)"/><path d="M-3.8,0.4 L-1.2,3.1 L3.8,-2.8" stroke="#fff" stroke-width="2.1" fill="none" stroke-linecap="round" stroke-linejoin="round"/></g><g transform="translate(1845.3,395.9)"><circle r="7.6" fill="#62cc3e"/><circle r="7.5" fill="url(#gchk)"/><path d="M-3.8,0.4 L-1.2,3.1 L3.8,-2.8" stroke="#fff" stroke-width="2.1" fill="none" stroke-linecap="round" stroke-linejoin="round"/></g></svg>
<svg style="position:absolute;left:0;top:0" width="1424" height="1128" viewBox="0 0 1424 1128"><g id="dcommon"><polygon fill="#DB7093" points="208.6,435.1 520.9,435.1 520.9,505.7 507,520.4 542.7,556.1 542.7,710.7 506.8,746.8 527,767.7 521,767.7 521,832.2 208.6,832.2"/>
<polygon fill="#DB7093" points="1243.2,435.1 930.6,435.1 930.6,506.4 944.8,520.6 908.7,557.4 908.7,710.3 944.5,746.6 930.4,761.2 930.4,832.2 1243.2,832.2"/>
<path fill="#5F9EA0" d="M208.6,463.8 L212,464.3 Q216.3,466 216.3,472.5 L216.3,488.5 Q216.6,494.5 221,496.8 L229.5,500.8 Q234.3,503 234.3,509 L234.3,685 Q234.3,692 229.5,694.6 Q225,697.2 220.8,693.8 Q218,691 214.8,682.5 Q213,679 208.6,678.6 Z"/>
<path fill="#5F9EA0" d="M520.9,444.7 L476,444.7 Q471,445.5 469.2,449 L464.8,458.3 Q463.8,460.2 461.8,461 L452.6,465.2 Q451,466 450.3,467.8 L446.5,476.4 Q445.7,478 444,478.8 L435,483 Q431.2,485 431.2,489.5 Q431.4,494 435,496 L438.5,497.9 Q439.6,498.5 441,498.5 L520.9,498.6 Z"/></g><rect x="832.5" y="420.4" width="17.3" height="2.4" fill="#9a9ae4"/><rect x="850.1" y="419.6" width="17.3" height="4" fill="#5a5ae0"/><rect x="867.7" y="419.3" width="17.3" height="4.6" fill="#3c3ce8"/><rect x="885.3" y="419.3" width="17.3" height="4.6" fill="#3434ea"/><rect x="902.9" y="419.7" width="17.3" height="3.8" fill="#5a5ae0"/><rect x="920.5" y="420" width="17.3" height="3.2" fill="#7878dc"/><rect x="938.1" y="420.2" width="17.3" height="2.8" fill="#8a8ada"/><rect x="955.7" y="420.4" width="17.3" height="2.4" fill="#9a9adc"/><rect x="973.3" y="420.5" width="17.3" height="2.2" fill="#a6a6e0"/><rect x="990.9" y="420.6" width="17.3" height="2" fill="#b0b0e4"/><rect x="1008.5" y="420.6" width="17.3" height="2" fill="#b8b8e8"/><rect x="1026.1" y="420.7" width="17.3" height="1.8" fill="#c0c0ea"/><rect x="1043.7" y="420.7" width="17.3" height="1.8" fill="#c8c8ee"/><rect x="1061.3" y="420.8" width="17.3" height="1.6" fill="#d0d0f0"/><rect x="1078.9" y="420.8" width="17.3" height="1.6" fill="#d8d8f4"/><rect x="1096.5" y="420.9" width="17.3" height="1.4" fill="#e0e0f6"/><rect x="424" y="844.8" width="17.3" height="2.4" fill="#9090d8"/><rect x="441.6" y="844.2" width="17.3" height="3.6" fill="#6a6adc"/><rect x="459.2" y="844.5" width="17.3" height="3" fill="#7a7ad2"/><rect x="476.8" y="844.5" width="17.3" height="3" fill="#7a7ad0"/><rect x="494.4" y="844.5" width="17.3" height="3" fill="#7c7cd0"/><rect x="512" y="844.5" width="17.3" height="3" fill="#7c7cd0"/><rect x="529.6" y="844.5" width="17.3" height="3" fill="#7e7ed0"/><rect x="547.2" y="844.5" width="17.3" height="3" fill="#8080d0"/><rect x="564.8" y="844.5" width="17.3" height="3" fill="#8282d2"/><rect x="582.4" y="844.6" width="17.3" height="2.8" fill="#8686d2"/><rect x="600" y="844.7" width="17.3" height="2.6" fill="#8a8ad4"/><rect x="617.6" y="844.8" width="17.3" height="2.4" fill="#9090d6"/><rect x="635.2" y="844.6" width="17.3" height="2.8" fill="#8484d2"/><rect x="652.8" y="844.9" width="17.3" height="2.2" fill="#9494d8"/><rect x="670.4" y="845" width="17.3" height="2" fill="#9a9ada"/><rect x="688" y="845" width="17.3" height="2" fill="#a0a0dc"/><rect x="705.6" y="845.1" width="17.3" height="1.8" fill="#aaaae0"/><rect x="723.2" y="845.2" width="17.3" height="1.6" fill="#b4b4e4"/><rect x="740.8" y="845.3" width="17.3" height="1.4" fill="#c0c0ea"/><rect x="758.4" y="845.4" width="17.3" height="1.2" fill="#ccccf0"/><rect x="904" y="845.2" width="123" height="1.6" fill="#b0b0e4"/><g stroke="#a23a3a" stroke-width="1" opacity="0.45" fill="none"><line x1="210.2" y1="421.6" x2="1241" y2="421.6"/><line x1="210.2" y1="846.2" x2="1241" y2="846.2"/></g><rect x="594.6" y="484.4" width="17.3" height="3.6" fill="#5a5ade"/><rect x="612.1" y="482.9" width="17.3" height="6.6" fill="#1212f2"/><rect x="629.7" y="482.9" width="17.3" height="6.6" fill="#1212f2"/><rect x="647.2" y="484.1" width="17.3" height="4.2" fill="#4646e0"/><rect x="664.8" y="484.3" width="17.3" height="3.8" fill="#5555dd"/><rect x="682.4" y="484.3" width="17.3" height="3.7" fill="#5a5adc"/><rect x="699.9" y="484.3" width="17.3" height="3.7" fill="#5c5cdc"/><rect x="717.5" y="484.3" width="17.3" height="3.7" fill="#5c5cdc"/><rect x="735" y="484.3" width="17.3" height="3.7" fill="#5a5adc"/><rect x="752.6" y="484.3" width="17.3" height="3.8" fill="#5555dd"/><rect x="770.1" y="484.1" width="17.3" height="4.2" fill="#4a4ae0"/><rect x="787.7" y="483.7" width="17.3" height="5" fill="#3a3ae6"/><rect x="805.2" y="483.2" width="17.3" height="6" fill="#2424ee"/><rect x="822.8" y="482.9" width="17.2" height="6.6" fill="#1212f2"/><rect x="594.6" y="477.6" width="17.3" height="2.6" fill="#8a8adf"/><rect x="612.1" y="476.5" width="17.3" height="4.8" fill="#3a3ae6"/><rect x="629.7" y="476.5" width="17.3" height="4.8" fill="#4040e4"/><rect x="647.2" y="477.2" width="17.3" height="3.4" fill="#6a6ada"/><rect x="664.8" y="477.4" width="17.3" height="3" fill="#7a7ad8"/><rect x="682.4" y="477.4" width="17.3" height="3" fill="#8080d6"/><rect x="699.9" y="477.4" width="17.3" height="3" fill="#8484d6"/><rect x="717.5" y="477.4" width="17.3" height="3" fill="#8484d6"/><rect x="735" y="477.4" width="17.3" height="3" fill="#8080d6"/><rect x="752.6" y="477.4" width="17.3" height="3" fill="#7a7ad8"/><rect x="770.1" y="477.2" width="17.3" height="3.4" fill="#6a6ada"/><rect x="787.7" y="476.9" width="17.3" height="4" fill="#5050e0"/><rect x="805.2" y="476.5" width="17.3" height="4.8" fill="#3a3ae6"/><rect x="630" y="470.6" width="192" height="2" fill="#b4b4f0"/><rect x="700" y="464" width="100" height="1.2" fill="#d0d0f6"/><rect x="612" y="802.4" width="87" height="2" fill="#7c7cd4"/><rect x="699" y="802.7" width="91" height="1.4" fill="#b8b8e8"/><rect x="560" y="802.8" width="52" height="1.2" fill="#c4c4ee"/><rect x="894.2" y="555" width="2.2" height="36" fill="#9a9ae0"/><rect x="872.8" y="555" width="1.4" height="70" fill="#c8c8f0"/><g stroke-width="0.9" opacity="0.72"><g id="dro1reb" stroke="#a23a3a" fill="none"><line x1="556.5" y1="432" x2="556.5" y2="834.8"/><line x1="895.2" y1="432" x2="895.2" y2="834.8"/><line x1="563.6" y1="432" x2="563.6" y2="834.8"/><line x1="888.1" y1="432" x2="888.1" y2="834.8"/><line x1="571" y1="432" x2="571" y2="834.8"/><line x1="880.7" y1="432" x2="880.7" y2="834.8"/><line x1="578.5" y1="432" x2="578.5" y2="834.8"/><line x1="873.2" y1="432" x2="873.2" y2="834.8"/><line x1="524" y1="464.4" x2="927.5" y2="464.4"/><line x1="524" y1="471.5" x2="927.5" y2="471.5"/><line x1="524" y1="478.8" x2="927.5" y2="478.8"/><line x1="524" y1="486.4" x2="927.5" y2="486.4"/><line x1="524" y1="781.3" x2="927.5" y2="781.3"/><line x1="524" y1="788.3" x2="927.5" y2="788.3"/><line x1="524" y1="795.8" x2="927.5" y2="795.8"/><line x1="524" y1="803.4" x2="927.5" y2="803.4"/><line x1="518.3" y1="739.9" x2="619" y2="840.6"/><line x1="933.4" y1="739.9" x2="832.7" y2="840.6"/><line x1="518.3" y1="528.1" x2="619" y2="427.4"/><line x1="933.4" y1="528.1" x2="832.7" y2="427.4"/><line x1="523.2" y1="734.5" x2="624.3" y2="835.6"/><line x1="928.5" y1="734.5" x2="827.4" y2="835.6"/><line x1="523.2" y1="533.5" x2="624.3" y2="432.4"/><line x1="928.5" y1="533.5" x2="827.4" y2="432.4"/><line x1="528.3" y1="729.3" x2="629.7" y2="830.8"/><line x1="923.4" y1="729.3" x2="822" y2="830.8"/><line x1="528.3" y1="538.7" x2="629.7" y2="437.2"/><line x1="923.4" y1="538.7" x2="822" y2="437.2"/></g></g><rect x="207.4" y="418" width="1036.9" height="432" fill="none" stroke="#000" stroke-width="2.3"/><g stroke-width="2.2"><g id="dout"><rect x="582.4" y="490" width="287.5" height="288" fill="#fff" stroke="#000" vector-effect="non-scaling-stroke"/></g></g><g stroke-width="0.6" opacity="0.72"><path id="dro1c" d="M583.1,497.3L623.7,472.7M596.3,479.8L618.5,466.2M592.9,500L649.1,470M609.5,481.2L640.5,464.8M608.2,501.8L669,468.2M625.9,482.2L659.3,463.8M630.4,504.5L682,465.5M646,483.8L674.4,462.2M659.4,508.4L688.2,461.6M669.9,485.9L685.7,460.1M688.4,505.7L694.4,464.3M693.7,484.4L697.1,461.6M709.2,505L708.8,465M713.1,484L712.9,462M730.3,505.2L722.9,464.8M732.6,484.1L728.6,461.9M751.6,505.2L736.8,464.8M752.3,484.1L744.1,461.9M774.9,505L748.7,465M773,484L758.6,462M799.3,502.6L759.5,467.4M794.3,482.7L772.5,463.3M822.1,500.4L771.9,469.6M814.8,481.5L787.2,464.5M839.5,496.9L789.7,473.1M832.3,479.5L804.9,466.5M854.5,494.6L809.9,475.4M848.5,478.3L823.9,467.7M866.9,491.7L832.7,478.3M863.2,476.7L844.4,469.3M881.5,490.1L853.3,479.9M879.2,475.8L863.6,470.2M786.9,469L773.1,461M808.2,468.8L791.8,461.2M821.5,467.6L808.5,462.4M838.7,468.9L837.3,461.1M845.3,468.9L846.7,461.1M850.4,467.4L851.6,462.6M877.1,556.8L869.9,539.2M877.8,573L869.2,558.2M878.2,589.2L868.8,577.2M878.3,605.4L868.7,596.2M878.1,621.8L868.9,615M882.4,619.7L878.8,617.1M877.7,638.3L869.3,633.7M882.6,637.1L878.6,634.9M877.1,654.9L869.9,652.3M882.7,654.4L878.5,652.8M876.3,671.8L870.7,670.6M882.8,671.7L878.4,670.7M876,689L871,688.6M882.8,689L878.4,688.6M876,706.5L871,706.3M882.8,706.5L878.4,706.3M887.6,705.9L890,706.9M876,724.1L871,723.9M882.8,724.1L878.4,723.9M887.6,723.5L890,724.5M876,741.7L871,741.5M882.8,741.7L878.4,741.5M887.6,741.1L890,742.1M876,759.3L871,759.1M882.8,759.3L878.4,759.1M876,776.9L871,776.7M882.8,776.9L878.4,776.7M897.7,543.9L891.3,526.1M897.7,560.9L891.3,543.1M897.7,577.9L891.3,560.1M897.7,594.9L891.3,577.1M897.7,611.9L891.3,594.1M609.5,807.1L596.5,799.6M606,797.5L600,794M627.1,807.1L614.1,799.6M623.6,797.5L617.6,794M644.7,807.1L631.7,799.6M641.2,797.5L635.2,794M662.3,807.1L649.3,799.6M658.8,797.5L652.8,794M679.9,807.1L666.9,799.6M676.4,797.5L670.4,794M697.5,807.1L684.5,799.6M694,797.5L688,794M693.6,789.8L688.4,786.8M693.2,782.5L688.8,780M715.1,807.1L702.1,799.6M711.6,797.5L705.6,794M711.2,789.8L706,786.8M710.8,782.5L706.4,780M732.7,807.1L719.7,799.6M729.2,797.5L723.2,794M728.8,789.8L723.6,786.8M728.4,782.5L724,780M750.3,807.1L737.3,799.6M746.8,797.5L740.8,794M746.4,789.8L741.2,786.8M746,782.5L741.6,780M767.9,807.1L754.9,799.6M764.4,797.5L758.4,794M764,789.8L758.8,786.8M763.6,782.5L759.2,780M785.5,807.1L772.5,799.6M782,797.5L776,794M781.6,789.8L776.4,786.8M781.2,782.5L776.8,780M799.6,805.1L793.6,801.6M799.6,797.5L793.6,794M799.2,789.8L794,786.8M798.8,782.5L794.4,780M817.2,805.1L811.2,801.6M817.2,797.5L811.2,794M816.8,789.8L811.6,786.8M816.4,782.5L812,780M834.8,805.1L828.8,801.6M834.8,797.5L828.8,794M834.4,789.8L829.2,786.8M834,782.5L829.6,780M852.4,805.1L846.4,801.6M852.4,797.5L846.4,794M852,789.8L846.8,786.8M851.6,782.5L847.2,780M528.5,754L534.5,751M540,765.5L546,762.5M551.5,777L557.5,774M563,788.5L569,785.5M574.5,800L580.5,797M586,811.5L592,808.5M597.5,823L603.5,820M609,834.5L615,831.5M533.1,781.7L536.9,780.3M533.1,788.7L536.9,787.3M533.2,796.8L536.8,795.2M531.8,809.3L534.2,802.7M549.8,815.9L554.2,808.1M556,821.9L558,814.1M556.5,829L555.5,823M564.2,828L563.8,824M569.3,811.6L572.7,804.4M576.4,801.9L579.6,798.1M587.4,808.8L584.6,801.2M554.3,774L557.7,772M556.1,794.6L559.9,791.4M871.5,789L875.5,787M871.5,797L875.5,795M871.5,804L875.5,802M871.5,811L875.5,809M871.5,827L875.5,825M878.6,789L882.6,787M878.6,797L882.6,795M878.6,804L882.6,802M878.6,811L882.6,809M878.6,827L882.6,825M886,789L890,787M886,797L890,795M886,804L890,802M886,811L890,809M886,827L890,825M893.2,789L897.2,787M893.2,797L897.2,795M893.2,804L897.2,802M893.2,811L897.2,809M893.2,827L897.2,825M916,755L919,751M904,767L907,763M892,779L895,775M880,791L883,787M868,803L871,799M856,815L859,811M844,827L847,823" stroke="#222" fill="none"/></g><path d="M837.5,410L845,433M855,400L863.5,442.5M875.5,397L878,445M896.5,398L892.5,445M915.5,402.5L910,441M931.5,406L928.5,437.5M948.3,408L947.7,435M965.6,409.2L965.6,433.8M983.2,410L983.2,433M1000.8,410.5L1000.8,432.5M1018.4,410.7L1018.4,432.3M1036,411L1036,432M1053.6,411.3L1053.6,431.7M1071.2,412L1071.2,431M1088.8,412.8L1088.8,430.2M1106.4,415.5L1106.4,427.5M1124,418L1124,425M1141.6,419L1141.6,424M1159.2,420.7L1159.2,422.3M1176.8,420.7L1176.8,422.3M1194.4,420.7L1194.4,422.3M1212,420.7L1212,422.3M1229.6,420.7L1229.6,422.3M425,857.5L440,834M440.8,861.3L460,830.3M464,861.3L472.5,830.3M483.3,861.5L488.7,830M502.8,862L504.7,829.5M524.5,862L518.3,829.5M546.3,861.5L532.5,830M563.7,860L550.3,831M579.2,858.5L570,832.5M596.3,858L589.2,833M614.7,857L606.3,834.5M634.2,857.5L621.7,833M652.5,856.5L639.2,834.5M670.8,855.5L656.3,836M688.7,854.5L674.7,837.5M705.8,853L693,839M721.7,851L712,841M729.2,842L738.8,850M747.6,842.7L755.6,849.3M766.1,843.4L772.3,848.6M784.5,844.1L789.1,847.9M803,844.8L805.8,847.2M821.4,845.5L822.6,846.5M857.7,846.9L862.3,845.1M875.4,847.5L880.6,844.5M892.5,848.5L897.5,843.5M910.8,849.9L915.2,842.1M928.1,851.2L931.9,840.8M946.7,852.5L948.3,839.5M964.8,852.5L965.2,839.5M982.8,852.5L982.8,839.5M1004.2,851.9L996.8,840.1M1020.9,850.1L1015.1,841.9M1035.9,847.2L1034.1,844.8" stroke="#222" stroke-width="0.6" opacity="0.72" fill="none"/><path d="M219.5,420.9L219.5,422.2M237.1,420.9L237.1,422.2M254.7,420.9L254.7,422.2M272.3,420.9L272.3,422.2M289.9,420.9L289.9,422.2M307.5,420.9L307.5,422.2M325.1,420.9L325.1,422.2M342.7,420.9L342.7,422.2M360.3,420.9L360.3,422.2M377.9,420.9L377.9,422.2M395.5,420.9L395.5,422.2M413.1,420.9L413.1,422.2M430.7,420.9L430.7,422.2M448.3,420.9L448.3,422.2M465.9,420.9L465.9,422.2M483.5,420.9L483.5,422.2M501.1,420.9L501.1,422.2M518.7,420.9L518.7,422.2M536.3,420.9L536.3,422.2M553.9,420.9L553.9,422.2M571.5,420.9L571.5,422.2M219.5,845.5L219.5,846.8M237.1,845.5L237.1,846.8M254.7,845.5L254.7,846.8M272.3,845.5L272.3,846.8M289.9,845.5L289.9,846.8M307.5,845.5L307.5,846.8M325.1,845.5L325.1,846.8M342.7,845.5L342.7,846.8M360.3,845.5L360.3,846.8M377.9,845.5L377.9,846.8M395.5,845.5L395.5,846.8M413.1,845.5L413.1,846.8M1052.2,846.8L1053.8,845.6M1069.8,846.8L1071.4,845.6M1087.4,846.8L1089,845.6M1105,846.8L1106.6,845.6M1122.6,846.8L1124.2,845.6M1140.2,846.8L1141.8,845.6M1157.8,846.8L1159.4,845.6M1175.4,846.8L1177,845.6M1193,846.8L1194.6,845.6M1210.6,846.8L1212.2,845.6M1228.2,846.8L1229.8,845.6" stroke="#333" stroke-width="0.8" opacity="0.45" fill="none"/><g stroke="#00006e" stroke-width="2.4" fill="none" stroke-linejoin="miter"><line x1="351.5" y1="850.2" x2="423.4" y2="850.2"/><path d="M351.5,850.4 L338.3,867.9 L364.7,867.9 Z"/><line x1="337.9" y1="871.9" x2="365.1" y2="871.9"/><line x1="351.5" y1="909.6" x2="351.5" y2="886" stroke-linecap="round"/><path d="M351.5,875.6 L348.9,889.6 L354.1,889.6 Z" fill="#00006e" stroke-width="0.6"/><path d="M387.6,850.4 L374.4,867.9 L400.8,867.9 Z"/><line x1="374" y1="871.9" x2="401.2" y2="871.9"/><line x1="387.6" y1="909.6" x2="387.6" y2="886" stroke-linecap="round"/><path d="M387.6,875.6 L385,889.6 L390.2,889.6 Z" fill="#00006e" stroke-width="0.6"/><path d="M423.4,850.4 L410.2,867.9 L436.6,867.9 Z"/><line x1="409.8" y1="871.9" x2="437" y2="871.9"/><line x1="423.4" y1="909.6" x2="423.4" y2="886" stroke-linecap="round"/><path d="M423.4,875.6 L420.8,889.6 L426,889.6 Z" fill="#00006e" stroke-width="0.6"/><line x1="1028" y1="850.2" x2="1100" y2="850.2"/><path d="M1028,850.4 L1014.8,867.6 L1041.2,867.6 Z"/><line x1="1028" y1="899" x2="1028" y2="880" stroke-linecap="round"/><path d="M1028,871.2 L1025.6,883.5 L1030.4,883.5 Z" fill="#00006e" stroke-width="0.6"/><path d="M1063.9,850.4 L1050.7,867.6 L1077.1,867.6 Z"/><line x1="1063.9" y1="899" x2="1063.9" y2="880" stroke-linecap="round"/><path d="M1063.9,871.2 L1061.5,883.5 L1066.3,883.5 Z" fill="#00006e" stroke-width="0.6"/><path d="M1100,850.4 L1086.8,867.6 L1113.2,867.6 Z"/><line x1="1100" y1="899" x2="1100" y2="880" stroke-linecap="round"/><path d="M1100,871.2 L1097.6,883.5 L1102.4,883.5 Z" fill="#00006e" stroke-width="0.6"/></g><text x="821.6" y="484.3" font-family="Liberation Sans, sans-serif" font-weight="bold" font-size="11.2" stroke="#fff" stroke-width="2.2" stroke-linejoin="round" textLength="52" lengthAdjust="spacingAndGlyphs">0.015 mm</text><circle cx="822.3" cy="486.4" r="2.6" fill="#000"/><text x="821.6" y="484.3" font-family="Liberation Sans, sans-serif" font-weight="bold" font-size="11.2" fill="#000" textLength="52" lengthAdjust="spacingAndGlyphs">0.015 mm</text></svg>
<svg style="position:absolute;left:1430px;top:620px" width="490" height="300" viewBox="1430 620 490 300"><g transform="translate(1375.05,533.0) scale(0.4009)"><use href="#dcommon"/></g><rect x="1613.4" y="726.6" width="7.0" height="2.2" fill="#4a4ad8"/><rect x="1620.5" y="726.6" width="7.0" height="2.2" fill="#1010e8"/><rect x="1627.5" y="726.6" width="7.0" height="2.2" fill="#1010e8"/><rect x="1634.5" y="726.6" width="7.0" height="2.2" fill="#3838da"/><rect x="1641.6" y="726.6" width="7.0" height="2.2" fill="#4444d8"/><rect x="1648.6" y="726.6" width="7.0" height="2.2" fill="#4848d6"/><rect x="1655.6" y="726.6" width="7.0" height="2.2" fill="#4a4ad6"/><rect x="1662.7" y="726.6" width="7.0" height="2.2" fill="#4a4ad6"/><rect x="1669.7" y="726.6" width="7.0" height="2.2" fill="#4848d6"/><rect x="1676.7" y="726.6" width="7.0" height="2.2" fill="#4444d8"/><rect x="1683.8" y="726.6" width="7.0" height="2.2" fill="#3a3adc"/><rect x="1690.8" y="726.6" width="7.0" height="2.2" fill="#2a2ae0"/><rect x="1697.9" y="726.6" width="7.0" height="2.2" fill="#1818e6"/><rect x="1704.9" y="726.6" width="6.9" height="2.2" fill="#1010e8"/><rect x="1613.4" y="724.1" width="7.0" height="1.9" fill="#7a7adc"/><rect x="1620.5" y="724.1" width="7.0" height="1.9" fill="#3030e0"/><rect x="1627.5" y="724.1" width="7.0" height="1.9" fill="#3636de"/><rect x="1634.5" y="724.1" width="7.0" height="1.9" fill="#5a5ad8"/><rect x="1641.6" y="724.1" width="7.0" height="1.9" fill="#6a6ad6"/><rect x="1648.6" y="724.1" width="7.0" height="1.9" fill="#7070d6"/><rect x="1655.6" y="724.1" width="7.0" height="1.9" fill="#7474d6"/><rect x="1662.7" y="724.1" width="7.0" height="1.9" fill="#7474d6"/><rect x="1669.7" y="724.1" width="7.0" height="1.9" fill="#7070d6"/><rect x="1676.7" y="724.1" width="7.0" height="1.9" fill="#6a6ad6"/><rect x="1683.8" y="724.1" width="7.0" height="1.9" fill="#5a5ad8"/><rect x="1690.8" y="724.1" width="7.0" height="1.9" fill="#4646dc"/><rect x="1697.9" y="724.1" width="7.0" height="1.9" fill="#3030e0"/><rect x="1627.6" y="721.6" width="77.0" height="1" fill="#a8a8ec"/><rect x="1620.4" y="854.5" width="35.3" height="1.2" fill="#7070d0"/><rect x="1733.3" y="755.5" width="1.2" height="14.4" fill="#8a8add"/><g transform="translate(1375.05,533.0) scale(0.4009)"><g stroke-width="0.6" opacity="0.85"><use href="#dro1reb"/></g><g stroke-width="1.8"><use href="#dout"/></g><g stroke-width="0.5" opacity="0.85"><use href="#dro1c"/></g></g><rect x="1458.2" y="700.5" width="415.65" height="173.2" fill="none" stroke="#000" stroke-width="2.1"/><rect x="1704.4" y="715.3" width="51.8" height="12.9" rx="2.2" fill="#fff"/><circle cx="1704.7" cy="728.1" r="2.5" fill="#FF8C00"/><text x="1705.2" y="724.8" font-family="Liberation Sans, sans-serif" font-weight="bold" font-size="11.2" fill="#FF8C00" textLength="50.4" lengthAdjust="spacingAndGlyphs">0.015 mm</text></svg>
</body></html>
